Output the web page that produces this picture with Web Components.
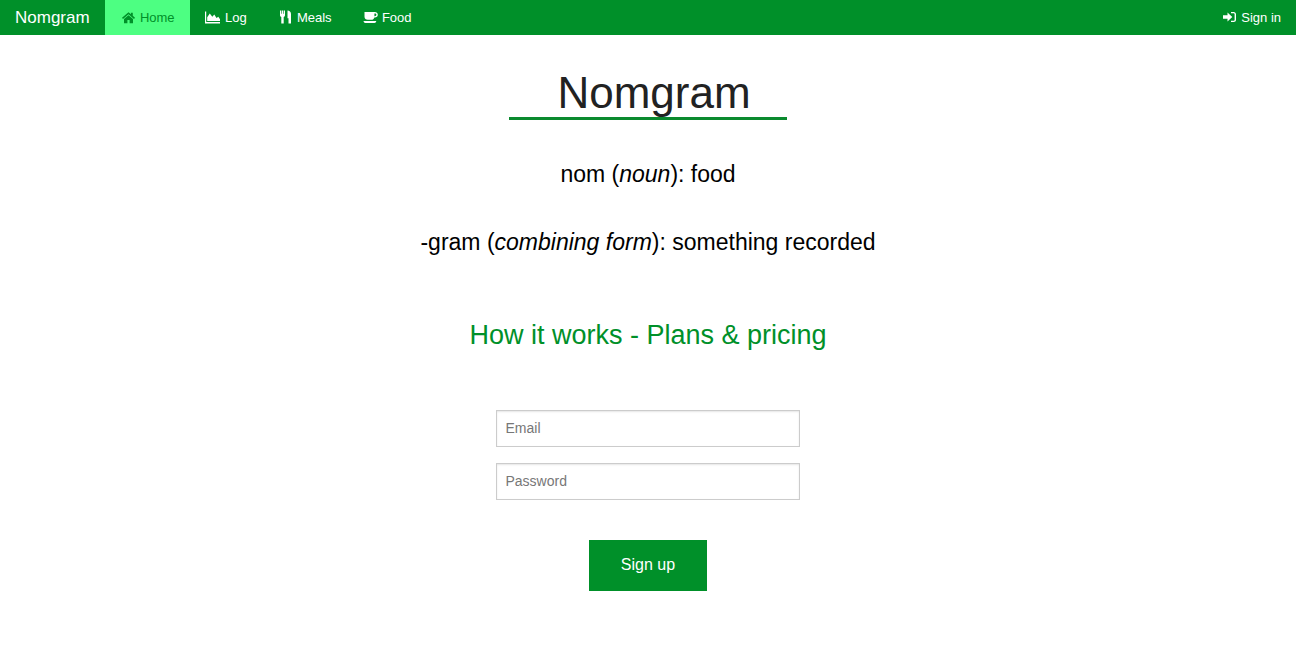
<!DOCTYPE html>
<html lang="en">
<head>
<meta charset="utf-8">
<title>Nomgram</title>
<style>
  html, body { margin: 0; padding: 0; background: #fff; }
  body { font-family: "Liberation Sans", Arial, sans-serif; color: #000; }
</style>
</head>
<body>
<nom-navbar></nom-navbar>
<nom-landing></nom-landing>

<script>
const ICONS = {
  home: '<svg width="13" height="13" viewBox="0 0 13 13"><path fill="currentColor" d="M6.500 1.200 0 6.700l1 1.200 5.500-4.600L12 7.900l1-1.200-2.200-1.900V1.800H8.900v1.400zM2 8v4.200h3.400V9h2.200v3.200H11V8L6.500 4.300z"/></svg>',
  log: '<svg width="18" height="13" viewBox="0 0 18 13"><path fill="currentColor" d="M0 .5h1.200v10.500H15v1.500H0z"/><path fill="currentColor" d="M2.200 10V6.200L4.800 2.500 7.300 5.800 9.300 3.500l2.200 3.600 1.800-1.300L15 8.300V10z"/></svg>',
  meals: '<svg width="11" height="14" viewBox="0 0 11 14"><path fill="currentColor" d="M0 .5h1.300v3.300h.6V.5h1.200v3.300h.6V.5H5v4.800c0 .8-.5 1.400-1.300 1.600v6.600H1.300V6.900C.5 6.700 0 6.100 0 5.300zM7.500.5c2 0 3.500 1.200 3.500 3.600v9.400H8.500V8.300h-1z"/></svg>',
  food: '<svg width="15" height="13" viewBox="0 0 15 13"><path fill="currentColor" d="M1.500 1h10.300c1.700 0 3 1 3 2.700S13.500 6.500 11.800 6.500h-.5c-.4 1.400-1.400 2.300-2.900 2.300H4.700C2.900 8.800 1.500 7.500 1.500 5.700zM11.400 2.400v2.800h.4c.9 0 1.600-.5 1.600-1.400s-.7-1.400-1.600-1.400zM.5 10h12.800c-.2 1.300-.8 2-1.900 2H2.400C1.300 12 .7 11.300.5 10z"/></svg>',
  signin: '<svg width="13" height="12" viewBox="0 0 13 12"><path fill="currentColor" d="M4.500 1.500 9.300 6 4.500 10.500V7.800H0V4.200h4.500zM8 .9h2.700c1.300 0 2.300 1 2.300 2.300v5.600c0 1.300-1 2.300-2.300 2.300H8V9.800h2.500c.7 0 1.100-.4 1.100-1.100V3.300c0-.7-.4-1.100-1.100-1.100H8z"/></svg>'
};

class NomNavItem extends HTMLElement {
  connectedCallback() {
    this.attachShadow({ mode: 'open' });
    this.shadowRoot.innerHTML = `
      <style>
        :host { display: block; }
        :host([active]) { width: 85px; }
        a {
          display: flex;
          align-items: center;
          height: 35px;
          padding: 0 15px;
          color: #fff;
          font-size: 13px;
          text-decoration: none;
        }
        :host([active]) a {
          background: #4dff82;
          color: #009029;
        }
        .icon {
          display: flex;
          justify-content: center;
          width: 18px;
          margin-right: 2.300px;
          margin-top: -1px;
        }
      </style>
      <a href="#">
        <span class="icon">${ICONS[this.getAttribute('icon')]}</span>
        <slot></slot>
      </a>
    `;
  }
}

class NomNavbar extends HTMLElement {
  connectedCallback() {
    this.attachShadow({ mode: 'open' });
    this.shadowRoot.innerHTML = `
      <style>
        :host {
          display: flex;
          height: 35px;
          background: #009029;
          color: #fff;
        }
        .brand {
          padding: 0 15px;
          font-size: 17px;
          line-height: 35px;
          color: #fff;
          text-decoration: none;
        }
        .links { display: flex; }
        .right { margin-left: auto; }
      </style>
      <a class="brand" href="#">Nomgram</a>
      <div class="links">
        <nom-nav-item icon="home" active>Home</nom-nav-item>
        <nom-nav-item icon="log">Log</nom-nav-item>
        <nom-nav-item icon="meals">Meals</nom-nav-item>
        <nom-nav-item icon="food">Food</nom-nav-item>
      </div>
      <div class="links right">
        <nom-nav-item icon="signin">Sign in</nom-nav-item>
      </div>
    `;
  }
}

class NomField extends HTMLElement {
  connectedCallback() {
    this.attachShadow({ mode: 'open' });
    this.shadowRoot.innerHTML = `
      <style>
        :host { display: block; }
        input {
          display: block;
          box-sizing: border-box;
          width: 304px;
          height: 37px;
          padding: 0 8px 2px 8.500px;
          border: 1px solid #ccc;
          border-radius: 0;
          outline: 0;
          box-shadow: inset 0 1px 2px rgba(0,0,0,.1);
          font: 14px "Liberation Sans", Arial, sans-serif;
          color: #555;
          background: #fff;
        }
        input::placeholder { color: #777; opacity: 1; }
      </style>
      <input type="${this.getAttribute('type')}" placeholder="${this.getAttribute('placeholder')}">
    `;
  }
}

class NomLanding extends HTMLElement {
  connectedCallback() {
    this.attachShadow({ mode: 'open' });
    this.shadowRoot.innerHTML = `
      <style>
        :host {
          display: flex;
          flex-direction: column;
          align-items: center;
          text-align: center;
        }
        h1 {
          box-sizing: border-box;
          width: 278px;
          height: 85px;
          margin: 0;
          padding: 31px 0 0 12px;
          border-bottom: 3px solid #0a8a2e;
          font-size: 44px;
          font-weight: 400;
          line-height: 53px;
          color: #222;
        }
        p {
          margin: 0;
          font-size: 23px;
          line-height: 26px;
          color: #000;
        }
        .nom { margin-top: 41px; }
        .gram { margin-top: 42px; }
        a.how {
          margin-top: 65px;
          font-size: 27px;
          line-height: 31px;
          color: #009029;
          text-decoration: none;
        }
        form {
          display: flex;
          flex-direction: column;
          align-items: center;
          gap: 16px;
          margin-top: 59px;
        }
        button {
          width: 118px;
          height: 51px;
          margin-top: 24px;
          padding: 0 0 2px;
          border: 0;
          border-radius: 0;
          background: #009029;
          color: #fff;
          font: 16px "Liberation Sans", Arial, sans-serif;
        }
      </style>
      <h1>Nomgram</h1>
      <p class="nom">nom (<em>noun</em>): food</p>
      <p class="gram">-gram (<em>combining form</em>): something recorded</p>
      <a class="how" href="#">How it works - Plans &amp; pricing</a>
      <form onsubmit="return false">
        <nom-field type="email" placeholder="Email"></nom-field>
        <nom-field type="password" placeholder="Password"></nom-field>
        <button type="submit">Sign up</button>
      </form>
    `;
  }
}

customElements.define('nom-nav-item', NomNavItem);
customElements.define('nom-navbar', NomNavbar);
customElements.define('nom-field', NomField);
customElements.define('nom-landing', NomLanding);
</script>
</body>
</html>
